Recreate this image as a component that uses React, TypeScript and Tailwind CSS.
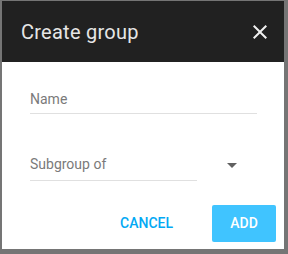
import React from "react";

export default function App() {
  return (
    <div
      className="w-[288px] h-[254px] bg-[#757575] pt-px pl-[2px]"
      style={{ fontFamily: "Roboto, 'Liberation Sans', sans-serif" }}
    >
      <div className="w-[282px] h-[248px] bg-white flex flex-col">
        <div className="h-[61px] bg-[#212121] flex items-center justify-between pl-[19px] pr-3">
          <span className="text-[20px] leading-6 tracking-[0.25px] text-[#e6e6e6]">Create group</span>
          <svg width="24" height="24" viewBox="0 0 24 24" className="block">
            <path
              fill="#f0f0f0"
              d="M19 6.41L17.59 5 12 10.59 6.41 5 5 6.41 10.59 12 5 17.59 6.41 19 12 13.41 17.59 19 19 17.59 13.41 12z"
            />
          </svg>
        </div>
        <div className="pl-[28px] pr-[27px] pt-[27px] flex flex-col">
          <div className="text-[14px] leading-5 text-[#7a7a7a] pb-[4px] border-b border-[#e0e0e0]">Name</div>
          <div className="flex items-start mt-[40px]">
            <div className="w-[167px] text-[14px] leading-5 text-[#7a7a7a] pb-[6px] border-b border-[#e0e0e0]">
              Subgroup of
            </div>
            <svg width="24" height="24" viewBox="0 0 24 24" className="block ml-[23px] -mt-px">
              <path fill="#616161" d="M7 10l5 5 5-5z" />
            </svg>
          </div>
        </div>
        <div className="flex justify-end items-center pr-2 mt-[24px]">
          <button className="h-[37px] px-4 text-[14px] font-medium text-[#03a9f4]">CANCEL</button>
          <button className="ml-[23px] w-[64px] h-[37px] rounded-[2px] bg-[#40c4ff] text-white text-[14px] font-medium">
            ADD
          </button>
        </div>
      </div>
    </div>
  );
}
